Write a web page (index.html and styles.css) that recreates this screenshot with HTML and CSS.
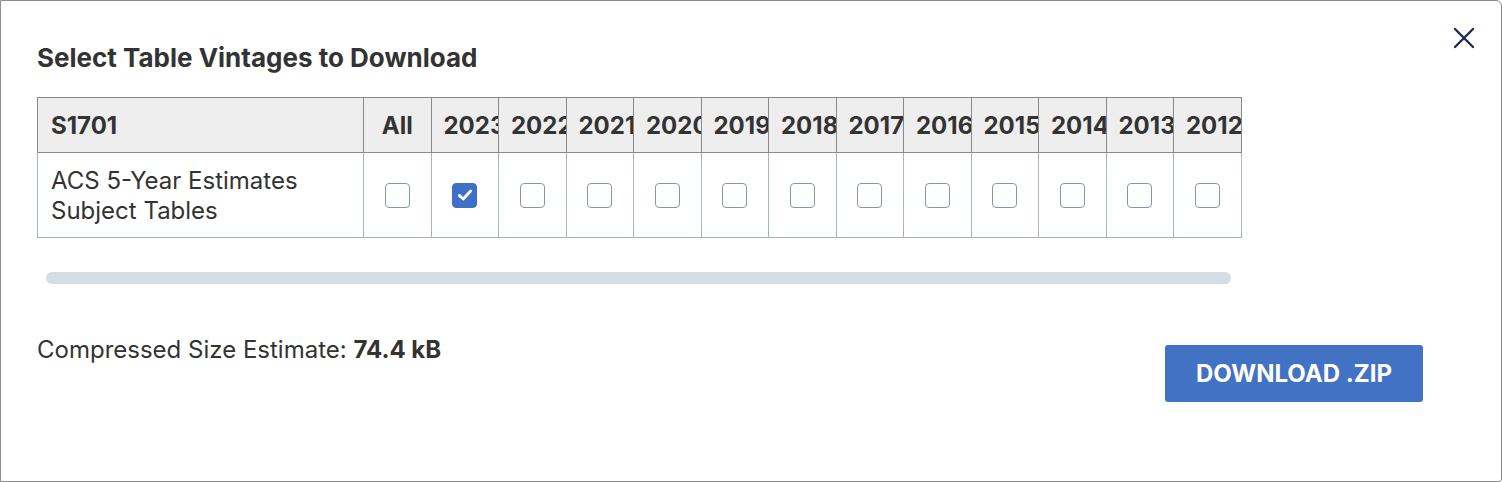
FILE: index.html
```html
<!DOCTYPE html>
<html lang="en">
<head>
<meta charset="utf-8">
<title>Select Table Vintages to Download</title>
<link rel="stylesheet" href="styles.css">
</head>
<body>
<div class="modal">
  <button class="close" aria-label="Close">
    <svg width="22" height="22" viewBox="0 0 22 22"><path d="M2 2 L20 20 M20 2 L2 20" stroke="#1f2d4d" stroke-width="2.4" stroke-linecap="round" fill="none"/></svg>
  </button>
  <h2 class="title">Select Table Vintages to Download</h2>
  <div class="table-wrap">
    <table class="vintages">
      <colgroup>
        <col class="c-name">
        <col class="c-y"><col class="c-y"><col class="c-y"><col class="c-y"><col class="c-y"><col class="c-y"><col class="c-y"><col class="c-y"><col class="c-y"><col class="c-y"><col class="c-y"><col class="c-y"><col class="c-y">
      </colgroup>
      <thead>
        <tr>
          <th class="name">S1701</th>
          <th class="all">All</th>
          <th>2023</th><th>2022</th><th>2021</th><th>2020</th><th>2019</th><th>2018</th><th>2017</th><th>2016</th><th>2015</th><th>2014</th><th>2013</th><th>2012</th>
        </tr>
      </thead>
      <tbody>
        <tr>
          <td class="name">ACS 5-Year Estimates<br>Subject Tables</td>
          <td><span class="cb"></span></td>
          <td><span class="cb checked"><svg width="20" height="20" viewBox="0 0 20 20"><path d="M4.3 10.4 L8.2 14 L15.7 6" stroke="#fff" stroke-width="2.8" fill="none" stroke-linecap="round" stroke-linejoin="round"/></svg></span></td>
          <td><span class="cb"></span></td>
          <td><span class="cb"></span></td>
          <td><span class="cb"></span></td>
          <td><span class="cb"></span></td>
          <td><span class="cb"></span></td>
          <td><span class="cb"></span></td>
          <td><span class="cb"></span></td>
          <td><span class="cb"></span></td>
          <td><span class="cb"></span></td>
          <td><span class="cb"></span></td>
          <td><span class="cb"></span></td>
        </tr>
      </tbody>
    </table>
    <div class="scrollbar"></div>
  </div>
  <div class="footer">
    <p class="size">Compressed Size Estimate: <strong>74.4 kB</strong></p>
    <button class="download">DOWNLOAD .ZIP</button>
  </div>
</div>
</body>
</html>
```
FILE: styles.css
```css
* { box-sizing: border-box; }
html, body { margin: 0; padding: 0; background: #ffffff; }
body {
  font-family: Inter, "Liberation Sans", sans-serif;
  color: #333333;
}
.modal {
  position: relative;
  width: 1502px;
  height: 482px;
  border: 1px solid #8c8c8c;
  border-radius: 0 6px 3px 0;
  padding: 0 0 0 36px;
  background: #ffffff;
  overflow: hidden;
}
.close {
  position: absolute;
  top: 26px;
  right: 26px;
  width: 22px;
  height: 22px;
  padding: 0;
  border: 0;
  background: none;
  display: flex;
}
.title {
  margin: 41px 0 0 0;
  font-size: 26px;
  line-height: 32px;
  font-weight: 700;
  color: #333333;
}
.table-wrap {
  margin-top: 23px;
  width: 1204px;
}
.vintages {
  table-layout: fixed;
  border-collapse: collapse;
  width: 1204px;
}
.c-name { width: 326px; }
.c-y { width: 67.5px; }
.vintages th {
  background: #eeeeee;
  border: 1px solid #8a8a8a;
  height: 55px;
  padding: 0 0 0 12px;
  font-size: 24px;
  font-weight: 700;
  text-align: left;
  white-space: nowrap;
  overflow: hidden;
  color: #333333;
}
.vintages th.name { padding-left: 13px; }
.vintages th.all { text-align: center; padding: 0; }
.vintages td {
  border: 1px solid #a6b3c4;
  border-top: 1px solid #8a8a8a;
  height: 85px;
  text-align: center;
  vertical-align: middle;
  padding: 0;
}
.vintages td.name {
  text-align: left;
  padding: 2px 0 0 13px;
  font-size: 24px;
  line-height: 30px;
  color: #333333;
}
.cb {
  display: inline-flex;
  align-items: center;
  justify-content: center;
  width: 25px;
  height: 25px;
  border: 1.5px solid #8597a9;
  border-radius: 4px;
  background: #ffffff;
  vertical-align: middle;
}
.cb.checked {
  background: #3e70c7;
  border-color: #3e70c7;
}
.scrollbar {
  margin: 34px 10px 0 9px;
  height: 12px;
  border-radius: 6px;
  background: #d6dde2;
}
.footer {
  display: flex;
  justify-content: space-between;
  align-items: flex-start;
  width: 1386px;
  margin-top: 48px;
}
.size {
  margin: 3px 0 0 0;
  font-size: 24px;
  line-height: 30px;
  color: #333333;
}
.size strong { font-weight: 700; }
.download {
  margin-top: 13px;
  width: 258px;
  height: 57px;
  border: 0;
  border-radius: 3px;
  background: #4272c4;
  color: #ffffff;
  font-family: Inter, "Liberation Sans", sans-serif;
  font-size: 24px;
  font-weight: 700;
}
```
